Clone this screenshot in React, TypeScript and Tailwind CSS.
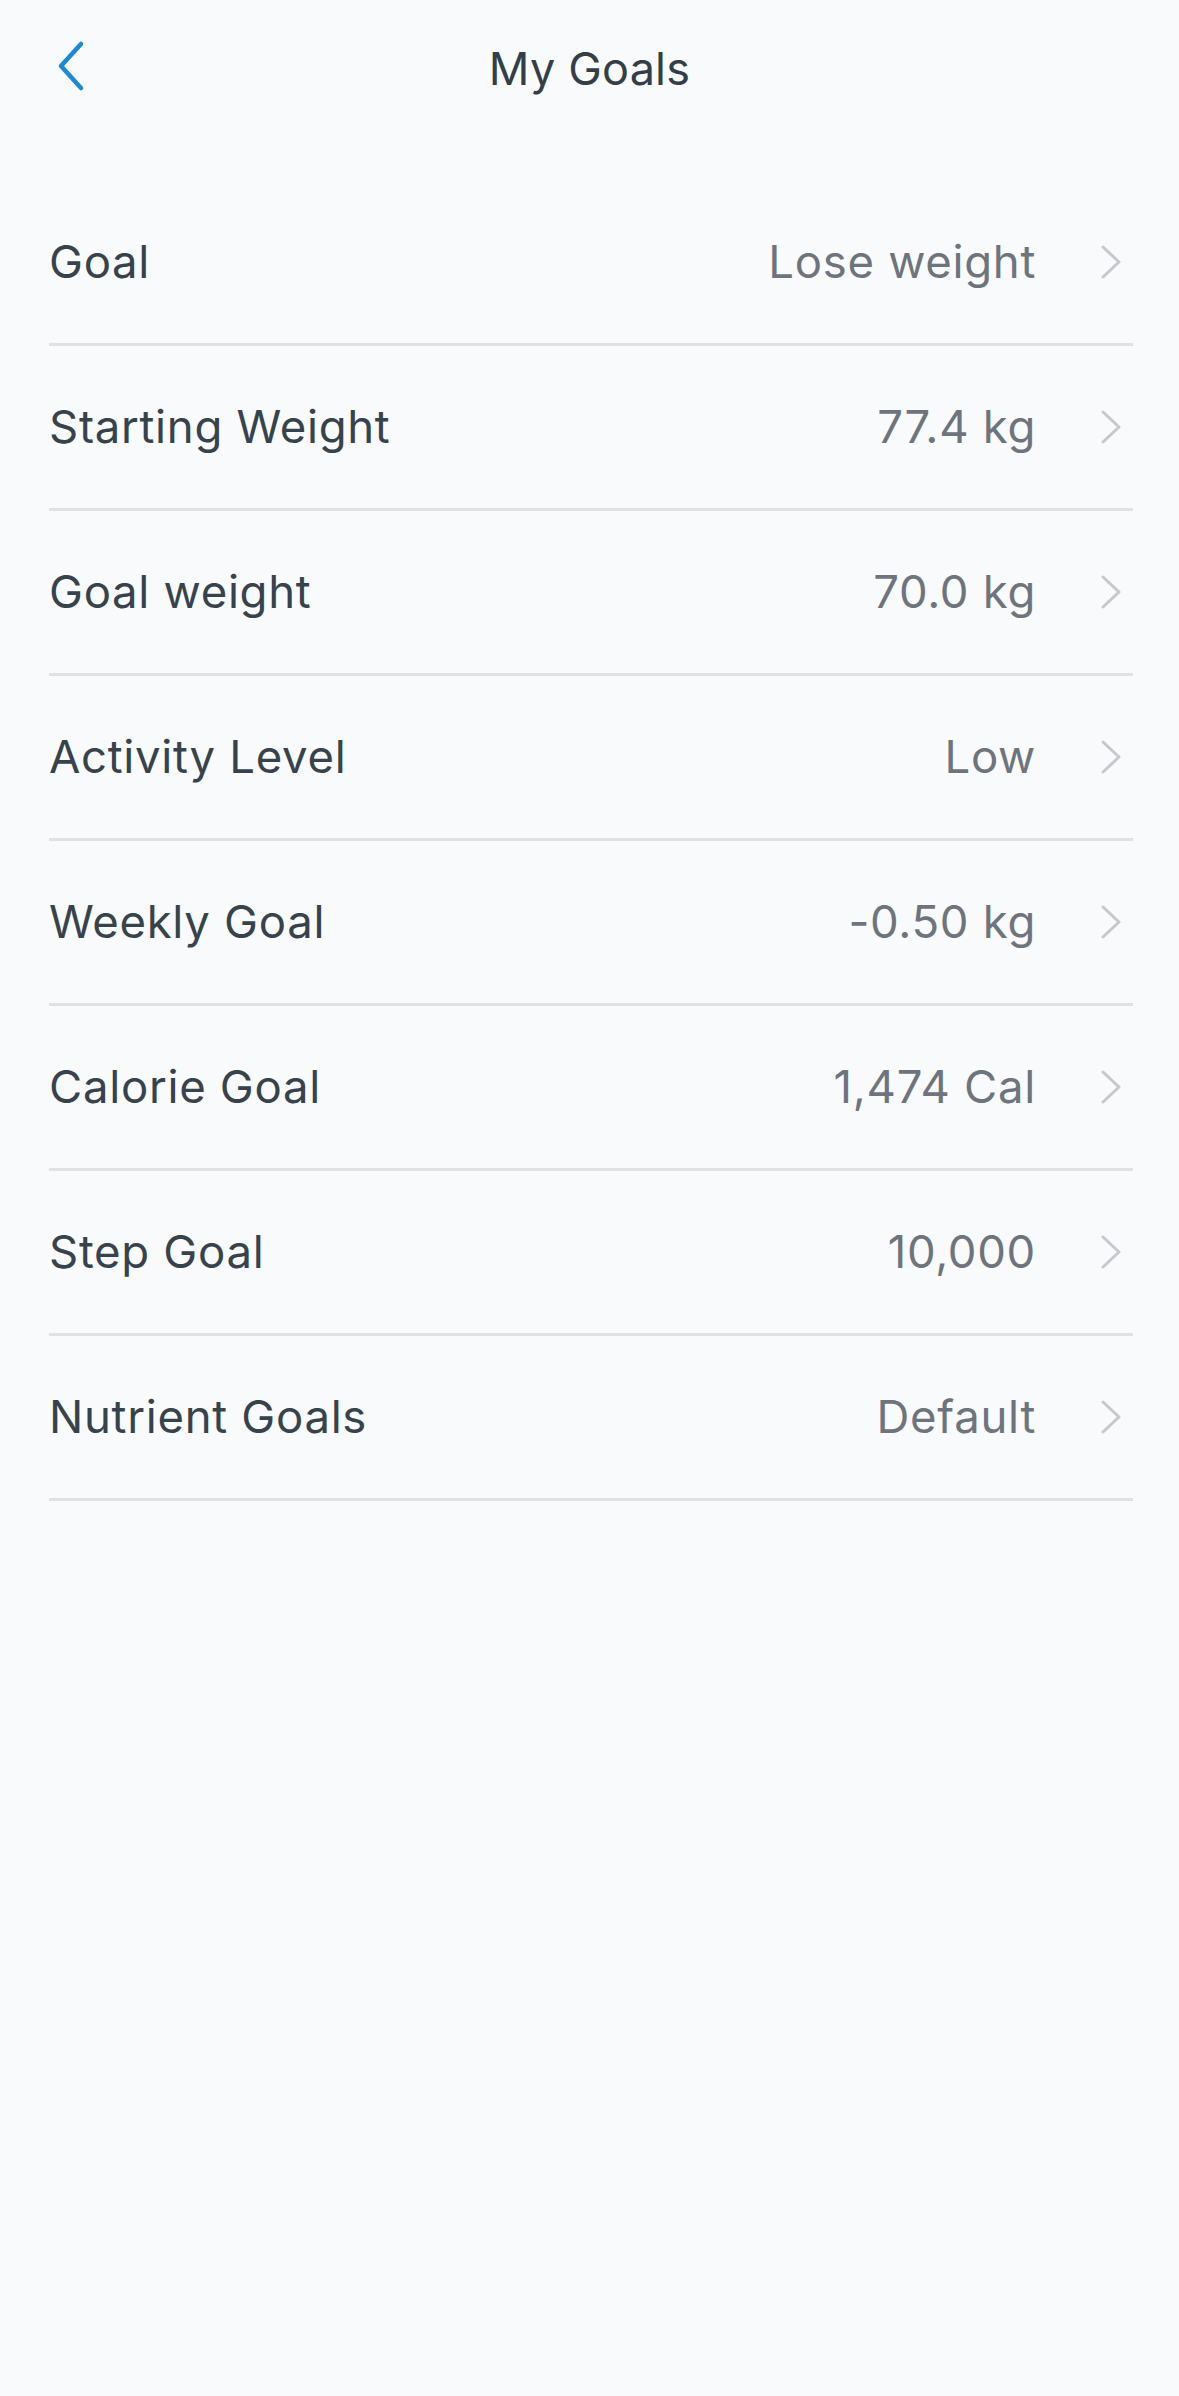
import React from 'react';

const rows: { label: string; value: string }[] = [
  { label: 'Goal', value: 'Lose weight' },
  { label: 'Starting Weight', value: '77.4 kg' },
  { label: 'Goal weight', value: '70.0 kg' },
  { label: 'Activity Level', value: 'Low' },
  { label: 'Weekly Goal', value: '-0.50 kg' },
  { label: 'Calorie Goal', value: '1,474 Cal' },
  { label: 'Step Goal', value: '10,000' },
  { label: 'Nutrient Goals', value: 'Default' },
];

function Chevron() {
  return (
    <svg width="22" height="34" viewBox="0 0 22 34" fill="none" className="shrink-0">
      <path d="M3 2l16 15L3 32" stroke="#c5c8cc" strokeWidth="3" strokeLinecap="round" strokeLinejoin="round" />
    </svg>
  );
}

export default function App() {
  return (
    <div
      className="min-h-[2396px] w-full bg-[#f9fafc] text-[#36434c]"
      style={{ fontFamily: 'Inter, "Noto Sans", sans-serif' }}
    >
      {/* header */}
      <div className="relative flex h-[138px] items-center justify-center">
        <button className="absolute left-[55px] top-[40px] p-0">
          <svg width="30" height="52" viewBox="0 0 30 52" fill="none">
            <path d="M26 4L6 26l20 22" stroke="#1a8bd4" strokeWidth="4.5" strokeLinecap="round" strokeLinejoin="round" />
          </svg>
        </button>
        <h1 className="text-[45px] font-normal tracking-[0.2px] text-[#323e48]">My Goals</h1>
      </div>

      <div className="mt-[43px] pl-[49px] pr-[46px]">
        {rows.map((row) => (
          <div
            key={row.label}
            className="flex h-[165px] items-center border-b-[3px] border-[#dfe1e4] text-[45.5px] leading-none tracking-[0.7px]"
          >
            <span className="flex-1">{row.label}</span>
            <span className="text-[#6e747d]">{row.value}</span>
            <span className="ml-[64px] mr-[11px] flex items-center">
              <Chevron />
            </span>
          </div>
        ))}
      </div>
    </div>
  );
}
